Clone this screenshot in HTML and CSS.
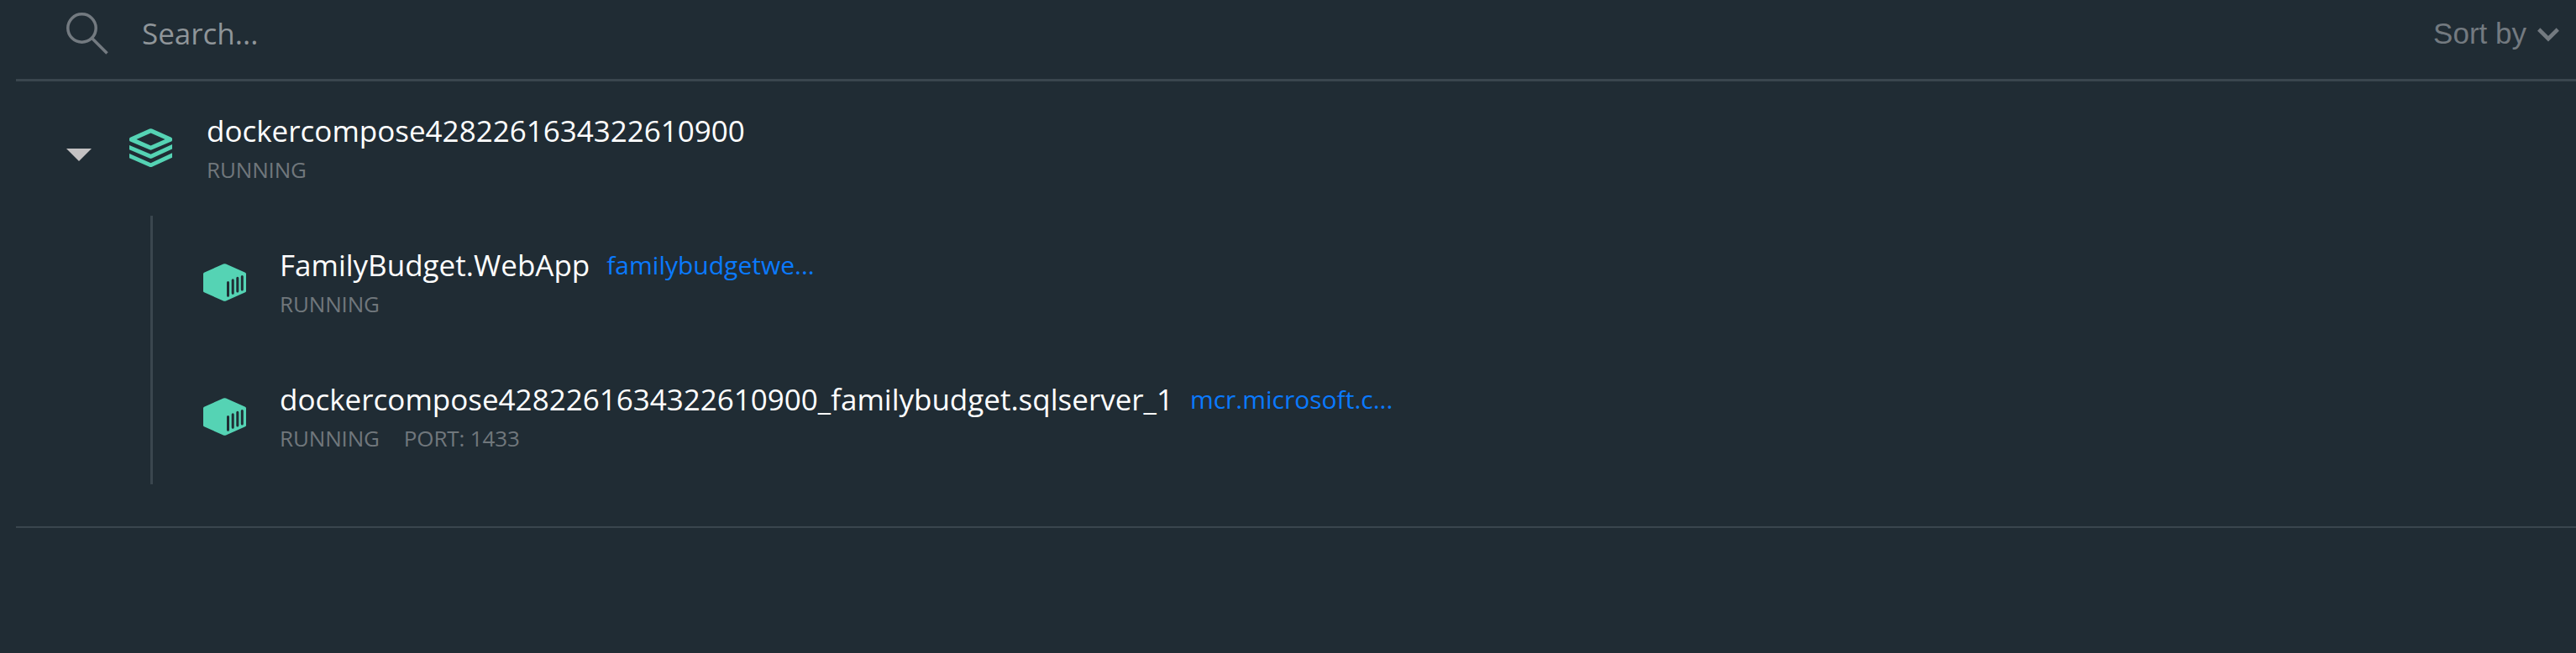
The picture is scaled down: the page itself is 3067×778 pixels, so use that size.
FILE: index.html
```html
<!DOCTYPE html>
<html lang="en">
<head>
<meta charset="utf-8">
<title>Containers</title>
<link rel="stylesheet" href="styles.css">
</head>
<body>
<svg class="defs" width="0" height="0">
  <symbol id="container" viewBox="0 0 51 45">
    <path fill="#55d3b4" d="M24 .5Q25.500 -.2 27 .5L50 10.700Q51 11.200 51 12.300V32.700Q51 33.700 50 34.200L27 44.500Q25.500 45.200 24 44.500L1 34.200Q0 33.700 0 32.700V12.300Q0 11.200 1 10.700Z"/>
    <path stroke="#202c34" stroke-width="3" stroke-linecap="round" d="M29.500 22.500V38.300M35.200 19.800V35.300M40.800 17.300V33M46.300 15.500V31"/>
  </symbol>
</svg>
<main class="page">
  <header class="toolbar">
    <div class="search">
      <svg class="search-icon" viewBox="0 0 50 50"><circle cx="18.500" cy="18.500" r="16.700"/><path d="M31 31L48.500 48.500"/></svg>
      <span class="search-text">Search...</span>
    </div>
    <div class="sort">
      <span>Sort by</span>
      <svg class="chevron" viewBox="0 0 26 17"><path d="M1.700 2L13 13.200L24.300 2"/></svg>
    </div>
  </header>
  <section class="group">
    <div class="row group-row">
      <svg class="caret" viewBox="0 0 30 15"><path d="M0 0H30L15 15Z"/></svg>
      <svg class="stack" viewBox="0 0 51 46">
        <path fill-rule="evenodd" d="M24 .5Q25.500 -.2 27 .5L50 10.800Q51 11.300 51 12.300V14Q51 15 50 15.500L27 25.300Q25.500 26 24 25.300L1 15.500Q0 15 0 14V12.300Q0 11.300 1 10.800ZM25.500 5.500L8.500 13.100L25.500 20.500L42.500 13.100Z"/>
        <path d="M0 20L25.500 30.800L51 19V24.500L27 35.600Q25.500 36.300 24 35.600L0 25.300Z"/>
        <path d="M0 30L25.500 41.200L51 29.300V34.800L27 45.800Q25.500 46.500 24 45.800L0 35.300Z"/>
      </svg>
      <div class="info">
        <div class="title"><span>dockercompose4282261634322610900</span></div>
        <div class="meta"><span>RUNNING</span></div>
      </div>
    </div>
    <div class="children">
      <div class="row">
        <svg class="box"><use href="#container"/></svg>
        <div class="info">
          <div class="title"><span>FamilyBudget.WebApp</span><a class="image">familybudgetwe...</a></div>
          <div class="meta"><span>RUNNING</span></div>
        </div>
      </div>
      <div class="row">
        <svg class="box"><use href="#container"/></svg>
        <div class="info">
          <div class="title"><span>dockercompose4282261634322610900_familybudget.sqlserver_1</span><a class="image">mcr.microsoft.c...</a></div>
          <div class="meta"><span>RUNNING</span><span>PORT: 1433</span></div>
        </div>
      </div>
    </div>
  </section>
</main>
</body>
</html>
```
FILE: styles.css
```css
* { box-sizing: border-box; }
body {
  margin: 0;
  background: #202c34;
  color: #fff;
  font-family: "Open Sans", sans-serif;
  overflow: hidden;
}
.defs { display: none; }
svg { display: block; flex: none; }
.page { height: 778px; padding-left: 19px; }
.toolbar {
  display: flex;
  justify-content: space-between;
  height: 97px;
  padding: 15px 20px 0 60px;
  border-bottom: 3px solid #3a464e;
}
.search { display: flex; gap: 40px; }
.search-icon { width: 50px; height: 50px; fill: none; stroke: #737a80; stroke-width: 3.500; }
.search-text { font-size: 35px; line-height: 50px; color: #8f9599; }
.sort {
  display: flex;
  gap: 13px;
  font-family: "Liberation Sans", Arial, sans-serif;
  font-size: 35px;
  line-height: 50px;
  color: #737a80;
}
.chevron { width: 26px; height: 17px; margin-top: 18px; fill: none; stroke: #737a80; stroke-width: 4.600; }
.group { height: 532px; border-bottom: 2px solid #3a464e; }
.row { display: flex; height: 160px; padding: 35px 0 0 60px; }
.caret { width: 30px; height: 15px; margin: 45px 45px 0 0; fill: #c4c2c3; }
.stack { width: 51px; height: 46px; margin: 21px 41px 0 0; fill: #55d3b4; }
.box { width: 51px; height: 45px; margin: 22px 40px 0 0; }
.children { margin-left: 160px; border-left: 3px solid #3a464e; }
.title {
  display: flex;
  align-items: flex-start;
  gap: 20px;
  height: 48px;
  font-size: 35px;
  line-height: 48px;
  white-space: nowrap;
}
.image { font-size: 30px; line-height: 47px; color: #0a7aff; }
.meta {
  display: flex;
  gap: 29px;
  margin-top: 4px;
  font-size: 26px;
  line-height: 36px;
  letter-spacing: -0.15px;
  color: #70777c;
}
```
